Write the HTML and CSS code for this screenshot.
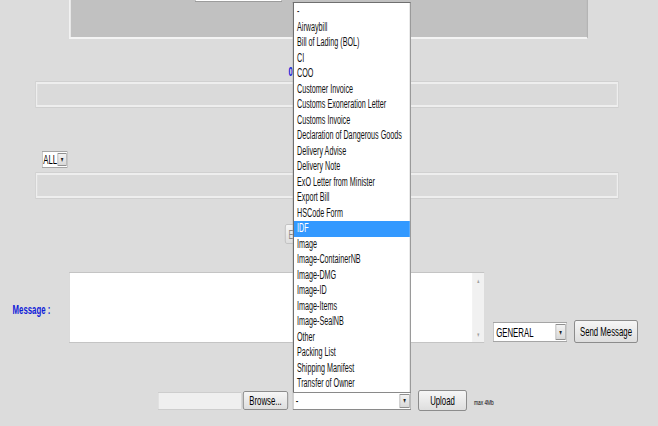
FILE: index.html
```html
<!DOCTYPE html>
<html>
<head>
<meta charset="utf-8">
<link rel="stylesheet" href="styles.css">
</head>
<body>
<div class="viewport">
<div class="page">
  <div class="top-panel"><div class="top-input"></div></div>
  <div class="count">0</div>
  <div class="box"></div>
  <div class="filter-row">
    <div class="select select-all"><span class="select-text">ALL</span><span class="arrow">&#9660;</span></div>
  </div>
  <div class="box box-2"></div>
  <div class="export-row"><button class="btn btn-export">E</button></div>
  <div class="message-row">
    <div class="msg-label">Message :</div>
    <div class="textarea"><div class="ta-body"></div><div class="ta-scroll"><span>&#9650;</span><span>&#9660;</span></div></div>
    <div class="select select-general"><span class="select-text">GENERAL</span><span class="arrow">&#9660;</span></div>
    <button class="btn btn-send">Send Message</button>
  </div>
  <div class="upload-row">
    <div class="file-text"></div>
    <button class="btn btn-browse">Browse...</button>
    <div class="select select-type"><span class="select-text">-</span><span class="arrow">&#9660;</span></div>
    <button class="btn btn-upload">Upload</button>
    <span class="max">max 4Mb</span>
  </div>
  <ul class="listbox">
    <li>-</li>
    <li>Airwaybill</li>
    <li>Bill of Lading (BOL)</li>
    <li>CI</li>
    <li>COO</li>
    <li>Customer Invoice</li>
    <li>Customs Exoneration Letter</li>
    <li>Customs Invoice</li>
    <li>Declaration of Dangerous Goods</li>
    <li>Delivery Advise</li>
    <li>Delivery Note</li>
    <li>ExO Letter from Minister</li>
    <li>Export Bill</li>
    <li>HSCode Form</li>
    <li class="selected">IDF</li>
    <li>Image</li>
    <li>Image-ContainerNB</li>
    <li>Image-DMG</li>
    <li>Image-ID</li>
    <li>Image-Items</li>
    <li>Image-SealNB</li>
    <li>Other</li>
    <li>Packing List</li>
    <li>Shipping Manifest</li>
    <li>Transfer of Owner</li>
  </ul>
</div>
</div>
</body>
</html>
```

FILE: styles.css
```css
html, body {
  margin: 0;
  padding: 0;
  background: #dcdcdc;
  overflow: hidden;
}
body {
  width: 658px;
  height: 426px;
  font-family: "Liberation Sans", Arial, sans-serif;
  font-size: 13px;
  color: #000;
}
.viewport {
  width: 658px;
  height: 426px;
  overflow: hidden;
}
.page {
  position: relative;
  width: 1096px;
  height: 426px;
  transform: scaleX(0.6);
  transform-origin: 0 0;
}
.top-panel {
  margin-left: 115px;
  width: 860px;
  height: 37px;
  box-sizing: content-box;
  background: #c1c1c1;
  border-left: 3px solid #f2f2f2;
  border-right: 2px solid #b4b4b4;
  border-bottom: 2px solid #f4f4f4;
}
.top-input {
  margin-left: 207px;
  width: 143px;
  height: 1px;
  background: #fff;
  border-bottom: 1px solid #9c9c9c;
  border-left: 1px solid #9c9c9c;
  border-right: 1px solid #9c9c9c;
}
.count {
  margin-top: 27px;
  height: 12px;
  line-height: 12px;
  padding-left: 481px;
  font-weight: bold;
  color: #1020d8;
}
.box {
  margin-top: 4px;
  margin-left: 60px;
  width: 970px;
  height: 25px;
  box-sizing: border-box;
  border: 2px solid #eeeeee;
  outline: 1px solid #d0d0d0;
  background: #dadada;
}
.box-2 {
  margin-top: 5px;
}
.filter-row {
  margin-top: 44px;
  height: 17px;
  padding-left: 70px;
  display: flex;
}
.select {
  display: flex;
  align-items: stretch;
  box-sizing: border-box;
  background: #fff;
  border: 1px solid #a5a5a5;
}
.select-text {
  flex: 1;
  padding-left: 4px;
  display: flex;
  align-items: center;
  white-space: nowrap;
}
.arrow {
  width: 15px;
  display: flex;
  align-items: center;
  justify-content: center;
  font-size: 7px;
  color: #222;
  background: linear-gradient(#f3f3f3, #d8d8d8);
  border: 1px solid #8f8f8f;
  margin: 1px;
}
.select-all {
  width: 43px;
  height: 17px;
}
.select-all .select-text {
  padding-left: 1px;
}
.export-row {
  margin-top: 26px;
  height: 20px;
  padding-left: 475px;
  display: flex;
}
.btn {
  font-family: "Liberation Sans", Arial, sans-serif;
  font-size: 13px;
  color: #000;
  padding: 0;
  box-sizing: border-box;
  border: 1px solid #777;
  border-radius: 3px;
  background: linear-gradient(#f6f6f6, #dedede);
}
.btn-export {
  width: 90px;
  height: 20px;
  color: #888;
  text-align: left;
  padding-left: 5px;
  border-color: #bdbdbd;
}
.message-row {
  margin-top: 28px;
  height: 71px;
  display: flex;
  align-items: flex-end;
}
.msg-label {
  width: 115px;
  box-sizing: border-box;
  padding-left: 21px;
  align-self: center;
  margin-top: 3px;
  font-weight: bold;
  color: #1020d8;
}
.textarea {
  width: 693px;
  height: 71px;
  box-sizing: border-box;
  display: flex;
  background: #fff;
  border: 1px solid #c4c4c4;
}
.ta-body {
  flex: 1;
}
.ta-scroll {
  width: 20px;
  background: #f1f1f1;
  display: flex;
  flex-direction: column;
  justify-content: space-between;
  align-items: center;
  font-size: 6px;
  color: #a0a0a0;
  padding: 5px 0 4px;
}
.select-general {
  margin-left: 14px;
  margin-bottom: 1px;
  width: 123px;
  height: 20px;
}
.btn-send {
  margin-left: 12px;
  width: 106px;
  height: 23px;
}
.upload-row {
  margin-top: 47px;
  height: 21px;
  display: flex;
  align-items: center;
}
.file-text {
  margin-left: 263px;
  width: 140px;
  height: 18px;
  box-sizing: border-box;
  background: #efefef;
  border: 1px solid #cdcdcd;
}
.btn-browse {
  margin-left: 2px;
  width: 75px;
  height: 19px;
}
.select-type {
  margin-left: 8px;
  width: 197px;
  height: 18px;
  border-color: #8a8a8a;
}
.btn-upload {
  margin-left: 12px;
  width: 81px;
  height: 21px;
}
.max {
  margin-left: 12px;
  margin-top: 4px;
  font-size: 8px;
}
.listbox {
  position: absolute;
  left: 488px;
  top: 2px;
  width: 197px;
  height: 390px;
  box-sizing: border-box;
  margin: 0;
  padding: 1px 0 0;
  list-style: none;
  background: #fff;
  border-top: 1px solid #6f6f6f;
  border-left: 2px solid #6f6f6f;
  border-right: 2px solid #9a9a9a;
  font-size: 12px;
  color: #111;
}
.listbox li {
  height: 15.52px;
  line-height: 15.52px;
  padding-left: 5px;
  white-space: nowrap;
}
.listbox li.selected {
  background: #3399ff;
  color: #fff;
}
```
